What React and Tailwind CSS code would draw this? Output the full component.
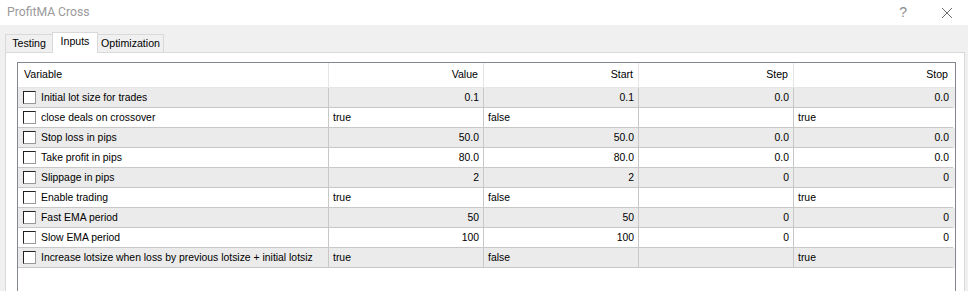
const rows = [
  ["Initial lot size for trades", "0.1", "0.1", "0.0", "0.0"],
  ["close deals on crossover", "true", "false", "", "true"],
  ["Stop loss in pips", "50.0", "50.0", "0.0", "0.0"],
  ["Take profit in pips", "80.0", "80.0", "0.0", "0.0"],
  ["Slippage in pips", "2", "2", "0", "0"],
  ["Enable trading", "true", "false", "", "true"],
  ["Fast EMA period", "50", "50", "0", "0"],
  ["Slow EMA period", "100", "100", "0", "0"],
  [
    "Increase lotsize when loss by previous lotsize + initial lotsiz",
    "true",
    "false",
    "",
    "true",
  ],
];

const isBool = (v) => v === "true" || v === "false" || v === "";

function Checkbox() {
  return (
    <span className="box-border h-[13px] w-[13px] shrink-0 border border-t-[#222] border-l-[#222] border-r-[#999] border-b-[#999] bg-white" />
  );
}

function App() {
  return (
    <div
      className="h-[291px] w-[968px] overflow-hidden bg-[#f0f0f0] text-[10.4px] text-black"
      style={{ fontFamily: '"Liberation Sans", Arial, sans-serif' }}
    >
      <div className="flex h-[25px] items-center justify-between bg-white">
        <span
          className="pl-[7px] text-[12.2px] text-[#9a9a9a]"
          style={{ fontFamily: 'Roboto, sans-serif' }}
        >
          ProfitMA Cross
        </span>
        <div className="flex items-center text-[#8c8c8c]">
          <span className="mr-[34px] text-[14px]">?</span>
          <svg width="12" height="12" viewBox="0 0 12 12" className="mr-[15px]">
            <path d="M1 1L11 11M11 1L1 11" stroke="#6e6e6e" strokeWidth="1" />
          </svg>
        </div>
      </div>

      <div className="flex items-end pl-[5px] pt-[7px] text-[10.6px]">
        <div className="box-border flex h-[18px] w-[48px] items-center justify-center border border-b-0 border-[#d9d9d9] bg-[#f0f0f0] pt-px">
          Testing
        </div>
        <div className="-mx-px relative z-10 -mb-px box-border flex h-[21px] w-[46px] items-center justify-center border border-b-0 border-[#d9d9d9] bg-white pb-[3px]">
          Inputs
        </div>
        <div className="box-border flex h-[18px] w-[67px] items-center justify-center border border-b-0 border-[#d9d9d9] bg-[#f0f0f0] pt-px">
          Optimization
        </div>
      </div>

      <div className="ml-[5px] box-border h-[260px] w-[960px] border border-[#d9d9d9] bg-white pl-[11px] pt-[9px]">
        <div className="box-border h-[250px] w-[939px] border border-[#828790] bg-white">
          <div className="grid h-[25px] grid-cols-[311px_155px_155px_155px_159px] border-b border-[#e5e5e5] text-[10.6px]">
            <div className="flex items-center border-r border-[#e5e5e5] pl-[6px]">Variable</div>
            <div className="flex items-center justify-end border-r border-[#e5e5e5] pr-[5px]">Value</div>
            <div className="flex items-center justify-end border-r border-[#e5e5e5] pr-[5px]">Start</div>
            <div className="flex items-center justify-end border-r border-[#e5e5e5] pr-[5px]">Step</div>
            <div className="flex items-center justify-end pr-[5px]">Stop</div>
          </div>
          {rows.map((row, i) => (
            <div
              key={row[0]}
              className={
                "grid h-[20px] grid-cols-[311px_155px_155px_155px_159px] " +
                (i % 2 === 0 ? "bg-[#ebebeb]" : "bg-white")
              }
            >
              <div className="flex items-center gap-[5px] overflow-hidden whitespace-nowrap border-r border-b border-[#c8c8c8] pl-[5px]">
                <Checkbox />
                <span>{row[0]}</span>
              </div>
              {row.slice(1).map((v, j) => (
                <div
                  key={j}
                  className={
                    "flex items-center border-b border-[#c8c8c8] " +
                    (j < 3 ? "border-r " : "") +
                    (isBool(row[1]) ? "justify-start pl-[4px]" : "justify-end pr-[4px]")
                  }
                >
                  {v}
                </div>
              ))}
            </div>
          ))}
        </div>
      </div>
    </div>
  );
}

export default App;
